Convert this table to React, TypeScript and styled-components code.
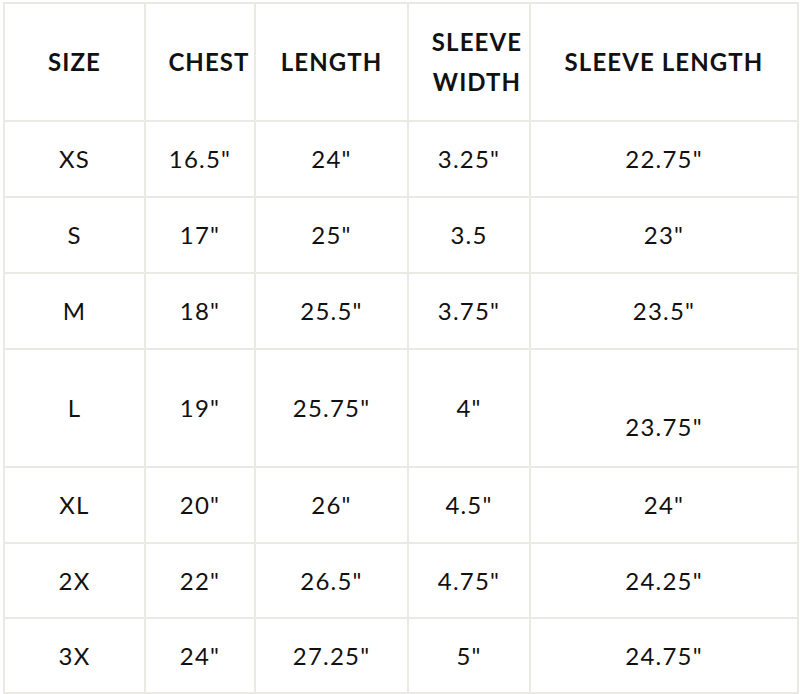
import React from "react";
import styled, { createGlobalStyle } from "styled-components";

const Global = createGlobalStyle`
  html, body { margin: 0; padding: 0; background: #ffffff; }
  body { font-family: "Lato", "Liberation Sans", sans-serif; color: #111111; }
`;

const Wrap = styled.div`
  padding: 2px 3px 0 3px;
`;

const Table = styled.table`
  border-collapse: collapse;
  table-layout: fixed;
  width: 794px;
`;

const Col = styled.col<{ $w: number }>`
  width: ${(p) => p.$w}px;
`;

const Row = styled.tr<{ $h: number }>`
  height: ${(p) => p.$h}px;
`;

const HeadCell = styled.th<{ $shift?: number }>`
  border: 2px solid #ebe9e4;
  padding: 0 0 0 ${(p) => p.$shift ?? 0}px;
  text-align: center;
  vertical-align: middle;
  font-size: 24px;
  font-weight: 700;
  line-height: 40px;
  letter-spacing: 1.1px;
  color: #111111;
`;

const Cell = styled.td<{ $drop?: number }>`
  border: 2px solid #ebe9e4;
  padding: ${(p) => (p.$drop ? `${p.$drop}px 0 0 0` : "0")};
  text-align: center;
  vertical-align: middle;
  font-size: 24px;
  font-weight: 400;
  line-height: 28px;
  letter-spacing: 1.2px;
  color: #111111;
`;

type R = { size: string; chest: string; length: string; sw: string; sl: string; h: number; drop?: number };

const rows: R[] = [
  { size: "XS", chest: '16.5"', length: '24"', sw: '3.25"', sl: '22.75"', h: 76 },
  { size: "S", chest: '17"', length: '25"', sw: "3.5", sl: '23"', h: 76 },
  { size: "M", chest: '18"', length: '25.5"', sw: '3.75"', sl: '23.5"', h: 76 },
  { size: "L", chest: '19"', length: '25.75"', sw: '4"', sl: '23.75"', h: 118, drop: 38 },
  { size: "XL", chest: '20"', length: '26"', sw: '4.5"', sl: '24"', h: 76 },
  { size: "2X", chest: '22"', length: '26.5"', sw: '4.75"', sl: '24.25"', h: 75 },
  { size: "3X", chest: '24"', length: '27.25"', sw: '5"', sl: '24.75"', h: 75 },
];

export default function App() {
  return (
    <>
      <Global />
      <Wrap>
        <Table>
          <colgroup>
            <Col $w={141} />
            <Col $w={110} />
            <Col $w={153} />
            <Col $w={122} />
            <Col $w={268} />
          </colgroup>
          <thead>
            <Row $h={118}>
              <HeadCell>SIZE</HeadCell>
              <HeadCell $shift={18}>CHEST</HeadCell>
              <HeadCell>LENGTH</HeadCell>
              <HeadCell $shift={16}>
                SLEEVE
                <br />
                WIDTH
              </HeadCell>
              <HeadCell>SLEEVE LENGTH</HeadCell>
            </Row>
          </thead>
          <tbody>
            {rows.map((r) => (
              <Row key={r.size} $h={r.h}>
                <Cell>{r.size}</Cell>
                <Cell>{r.chest}</Cell>
                <Cell>{r.length}</Cell>
                <Cell>{r.sw}</Cell>
                <Cell $drop={r.drop}>{r.sl}</Cell>
              </Row>
            ))}
          </tbody>
        </Table>
      </Wrap>
    </>
  );
}
